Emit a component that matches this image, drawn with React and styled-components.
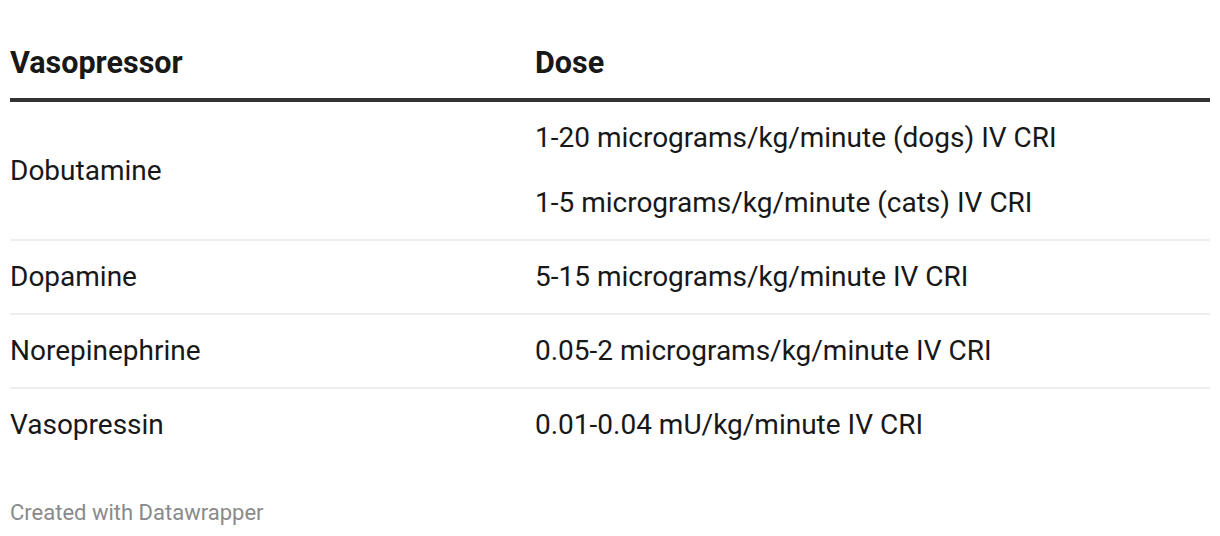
import React from 'react'
import styled, { createGlobalStyle } from 'styled-components'

const GlobalStyle = createGlobalStyle`
    body {
        margin: 0;
        background: #fff;
        font-family: Roboto, "Liberation Sans", sans-serif;
        color: #181818;
    }
`

const Wrapper = styled.div`
    padding: 45px 10px 0;
`

const Row = styled.div`
    display: grid;
    grid-template-columns: 525px 1fr;
    align-items: center;
    padding: 18px 0;
    border-bottom: ${props => (props.last ? 'none' : '2px solid #eeeeee')};
`

const HeadRow = styled.div`
    display: grid;
    grid-template-columns: 525px 1fr;
    padding-bottom: 17px;
    border-bottom: 4px solid #333333;
`

const HeadCell = styled.div`
    font-size: 30.5px;
    line-height: 36px;
    font-weight: 700;
    color: #181818;
`

const Cell = styled.div`
    font-size: 28px;
    line-height: 36px;
    display: flex;
    flex-direction: column;
    gap: 29px;
`

const Footer = styled.div`
    margin-top: 38px;
    font-size: 22px;
    line-height: 28px;
    color: #8a8a8a;
`

const rows = [
    {
        name: 'Dobutamine',
        doses: [
            '1-20 micrograms/kg/minute (dogs) IV CRI',
            '1-5 micrograms/kg/minute (cats) IV CRI',
        ],
    },
    { name: 'Dopamine', doses: ['5-15 micrograms/kg/minute IV CRI'] },
    { name: 'Norepinephrine', doses: ['0.05-2 micrograms/kg/minute IV CRI'] },
    { name: 'Vasopressin', doses: ['0.01-0.04 mU/kg/minute IV CRI'] },
]

const App = () => {
    return (
        <>
            <GlobalStyle />
            <Wrapper>
                <HeadRow>
                    <HeadCell>Vasopressor</HeadCell>
                    <HeadCell>Dose</HeadCell>
                </HeadRow>
                {rows.map((row, i) => (
                    <Row key={row.name} last={i === rows.length - 1}>
                        <Cell>{row.name}</Cell>
                        <Cell>
                            {row.doses.map(d => (
                                <span key={d}>{d}</span>
                            ))}
                        </Cell>
                    </Row>
                ))}
                <Footer>Created with Datawrapper</Footer>
            </Wrapper>
        </>
    )
}

export default App
